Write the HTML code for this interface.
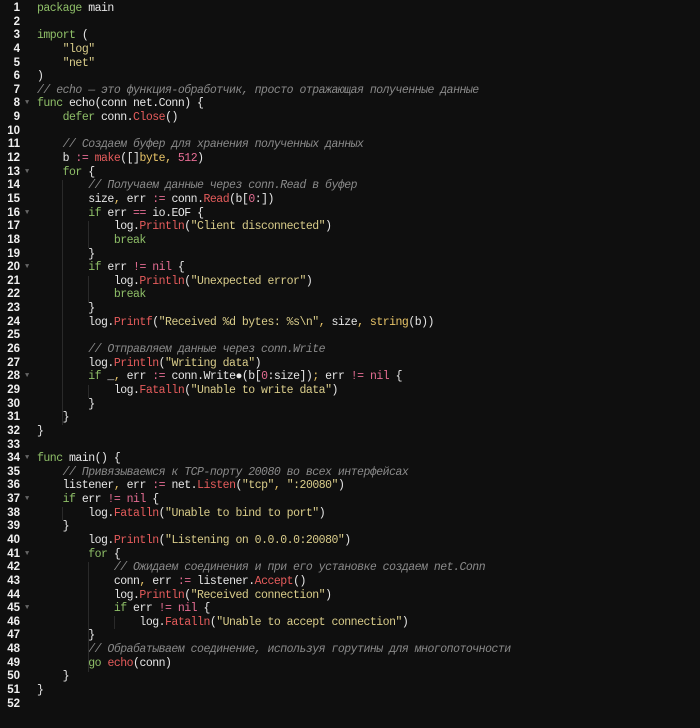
<!DOCTYPE html><html><head><style>
body{margin:0;background:#0f0f0f;width:700px;height:728px;overflow:hidden;font-family:"Liberation Mono","DejaVu Sans Mono",monospace;font-size:11.5px;letter-spacing:-0.5px;color:#e6e6e6}
.w{position:absolute;top:2px;left:0}
.l{height:13.65px;line-height:13.65px;white-space:pre;position:relative}
.n{position:absolute;left:0;width:20px;text-align:right;font-family:"Liberation Sans",sans-serif;font-weight:bold;font-size:11.5px;letter-spacing:0;color:#f0f0f0}
.f{position:absolute;left:25px;color:#666;font-size:7px}
.c{position:absolute;left:37px}
.k{color:#8fbf68}.s{color:#d9cc8a}.r{color:#e65c5c}.m{color:#8a8a8a;font-style:italic}.o{color:#e56d93}.y{color:#e8c468}
.g{position:absolute;width:1px;background:#2a2a2a}
</style></head><body><div class="w">
<div class="l"><span class="n">1</span><span class="c"><span class="k">package</span> main</span></div>
<div class="l"><span class="n">2</span></div>
<div class="l"><span class="n">3</span><span class="c"><span class="k">import</span> (</span></div>
<div class="l"><span class="n">4</span><span class="c">    <span class="s">"log"</span></span></div>
<div class="l"><span class="n">5</span><span class="c">    <span class="s">"net"</span></span></div>
<div class="l"><span class="n">6</span><span class="c">)</span></div>
<div class="l"><span class="n">7</span><span class="c"><span class="m">// echo — это функция-обработчик, просто отражающая полученные данные</span></span></div>
<div class="l"><span class="n">8</span><span class="f">▼</span><span class="c"><span class="k">func</span> echo(conn net.Conn) {</span></div>
<div class="l"><span class="n">9</span><span class="c">    <span class="k">defer</span> conn.<span class="r">Close</span>()</span></div>
<div class="l"><span class="n">10</span></div>
<div class="l"><span class="n">11</span><span class="c">    <span class="m">// Создаем буфер для хранения полученных данных</span></span></div>
<div class="l"><span class="n">12</span><span class="c">    b <span class="o">:=</span> <span class="r">make</span>([]<span class="y">byte</span><span class="y">,</span> <span class="o">512</span>)</span></div>
<div class="l"><span class="n">13</span><span class="f">▼</span><span class="c">    <span class="k">for</span> {</span></div>
<div class="l"><span class="n">14</span><span class="c">        <span class="m">// Получаем данные через conn.Read в буфер</span></span></div>
<div class="l"><span class="n">15</span><span class="c">        size<span class="y">,</span> err <span class="o">:=</span> conn.<span class="r">Read</span>(b[<span class="o">0</span>:])</span></div>
<div class="l"><span class="n">16</span><span class="f">▼</span><span class="c">        <span class="k">if</span> err <span class="o">==</span> io.EOF {</span></div>
<div class="l"><span class="n">17</span><span class="c">            log.<span class="r">Println</span>(<span class="s">"Client disconnected"</span>)</span></div>
<div class="l"><span class="n">18</span><span class="c">            <span class="k">break</span></span></div>
<div class="l"><span class="n">19</span><span class="c">        }</span></div>
<div class="l"><span class="n">20</span><span class="f">▼</span><span class="c">        <span class="k">if</span> err <span class="o">!=</span> <span class="o">nil</span> {</span></div>
<div class="l"><span class="n">21</span><span class="c">            log.<span class="r">Println</span>(<span class="s">"Unexpected error"</span>)</span></div>
<div class="l"><span class="n">22</span><span class="c">            <span class="k">break</span></span></div>
<div class="l"><span class="n">23</span><span class="c">        }</span></div>
<div class="l"><span class="n">24</span><span class="c">        log.<span class="r">Printf</span>(<span class="s">"Received %d bytes: %s\n"</span><span class="y">,</span> size<span class="y">,</span> <span class="y">string</span>(b))</span></div>
<div class="l"><span class="n">25</span></div>
<div class="l"><span class="n">26</span><span class="c">        <span class="m">// Отправляем данные через conn.Write</span></span></div>
<div class="l"><span class="n">27</span><span class="c">        log.<span class="r">Println</span>(<span class="s">"Writing data"</span>)</span></div>
<div class="l"><span class="n">28</span><span class="f">▼</span><span class="c">        <span class="k">if</span> _<span class="y">,</span> err <span class="o">:=</span> conn.Write●(b[<span class="o">0</span>:size])<span class="y">;</span> err <span class="o">!=</span> <span class="o">nil</span> {</span></div>
<div class="l"><span class="n">29</span><span class="c">            log.<span class="r">Fatalln</span>(<span class="s">"Unable to write data"</span>)</span></div>
<div class="l"><span class="n">30</span><span class="c">        }</span></div>
<div class="l"><span class="n">31</span><span class="c">    }</span></div>
<div class="l"><span class="n">32</span><span class="c">}</span></div>
<div class="l"><span class="n">33</span></div>
<div class="l"><span class="n">34</span><span class="f">▼</span><span class="c"><span class="k">func</span> main() {</span></div>
<div class="l"><span class="n">35</span><span class="c">    <span class="m">// Привязываемся к TCP-порту 20080 во всех интерфейсах</span></span></div>
<div class="l"><span class="n">36</span><span class="c">    listener<span class="y">,</span> err <span class="o">:=</span> net.<span class="r">Listen</span>(<span class="s">"tcp"</span><span class="y">,</span> <span class="s">":20080"</span>)</span></div>
<div class="l"><span class="n">37</span><span class="f">▼</span><span class="c">    <span class="k">if</span> err <span class="o">!=</span> <span class="o">nil</span> {</span></div>
<div class="l"><span class="n">38</span><span class="c">        log.<span class="r">Fatalln</span>(<span class="s">"Unable to bind to port"</span>)</span></div>
<div class="l"><span class="n">39</span><span class="c">    }</span></div>
<div class="l"><span class="n">40</span><span class="c">        log.<span class="r">Println</span>(<span class="s">"Listening on 0.0.0.0:20080"</span>)</span></div>
<div class="l"><span class="n">41</span><span class="f">▼</span><span class="c">        <span class="k">for</span> {</span></div>
<div class="l"><span class="n">42</span><span class="c">            <span class="m">// Ожидаем соединения и при его установке создаем net.Conn</span></span></div>
<div class="l"><span class="n">43</span><span class="c">            conn<span class="y">,</span> err <span class="o">:=</span> listener.<span class="r">Accept</span>()</span></div>
<div class="l"><span class="n">44</span><span class="c">            log.<span class="r">Println</span>(<span class="s">"Received connection"</span>)</span></div>
<div class="l"><span class="n">45</span><span class="f">▼</span><span class="c">            <span class="k">if</span> err <span class="o">!=</span> <span class="o">nil</span> {</span></div>
<div class="l"><span class="n">46</span><span class="c">                log.<span class="r">Fatalln</span>(<span class="s">"Unable to accept connection"</span>)</span></div>
<div class="l"><span class="n">47</span><span class="c">        }</span></div>
<div class="l"><span class="n">48</span><span class="c">        <span class="m">// Обрабатываем соединение, используя горутины для многопоточности</span></span></div>
<div class="l"><span class="n">49</span><span class="c">        <span class="k">go</span> <span class="r">echo</span>(conn)</span></div>
<div class="l"><span class="n">50</span><span class="c">    }</span></div>
<div class="l"><span class="n">51</span><span class="c">}</span></div>
<div class="l"><span class="n">52</span></div>
</div>
<div class="g" style="left:62px;top:180px;height:245px"></div>
<div class="g" style="left:88px;top:221px;height:27px"></div>
<div class="g" style="left:88px;top:276px;height:27px"></div>
<div class="g" style="left:88px;top:385px;height:13px"></div>
<div class="g" style="left:62px;top:507px;height:13px"></div>
<div class="g" style="left:88px;top:562px;height:110px"></div>
<div class="g" style="left:114px;top:616px;height:13px"></div>
</body></html>
